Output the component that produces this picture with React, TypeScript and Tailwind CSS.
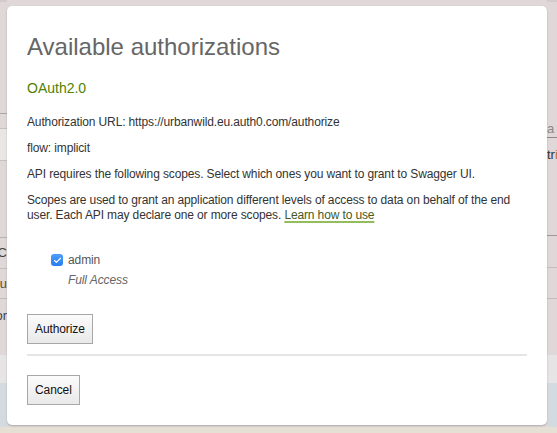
import { Check } from 'lucide-react';

function BackdropLeft() {
  return (
    <div className="flex w-[7px] flex-col overflow-hidden text-[13px] text-[#444]">
      <div className="h-[2px] bg-[#d4cbcb]" />
      <div className="h-[111px]" />
      <div className="h-px bg-[#aea7a7]" />
      <div className="h-[14px]" />
      <div className="h-[33px] border-y border-[#c6c0c0] bg-[#e9e6e6]" />
      <div className="h-[76px]" />
      <div className="flex h-[31px] items-center justify-end whitespace-nowrap border-t border-[#b9b2b2]">2C</div>
      <div className="flex h-[30px] items-center justify-end whitespace-nowrap border-t border-[#c4bdbd] text-[#6b4a2a]">u</div>
      <div className="flex h-[57px] items-start justify-end whitespace-nowrap border-t border-[#c4bdbd] pt-[7px]">or</div>
      <div className="h-[28px] bg-[#e6e4e4]" />
      <div className="flex-1 bg-[#d3dbe1]" />
    </div>
  );
}

function BackdropRight() {
  return (
    <div className="flex w-[10px] flex-col overflow-hidden text-[13px] text-[#333]">
      <div className="h-[2px] bg-[#d4cbcb]" />
      <div className="h-[118px]" />
      <div className="h-[17px] whitespace-nowrap leading-[17px] text-[#888]">a</div>
      <div className="h-px bg-[#8e8888]" />
      <div className="h-[34px] whitespace-nowrap leading-[34px]">
        tr<span className="text-[#c66a10]">i</span>
      </div>
      <div className="h-[63px]" />
      <div className="h-[32px] border-t border-[#9e9898]" />
      <div className="h-[31px] border-t border-[#c4bdbd]" />
      <div className="h-[57px] border-t border-[#c4bdbd]" />
      <div className="h-[28px] bg-[#e6e4e4]" />
      <div className="flex-1 bg-[#d3dbe1]" />
    </div>
  );
}

function Button({ label }: { label: string }) {
  return (
    <button className="h-[30px] border border-[#a8a8a8] bg-linear-to-b from-[#fbfbfb] to-[#e9e9e9] px-[7px] text-[12px] tracking-[-0.1px] text-[#111]">
      {label}
    </button>
  );
}

function Modal() {
  return (
    <div className="absolute left-[7px] top-[6px] w-[540px] rounded-[5px] bg-white px-5 pb-5 pt-[27px] shadow-[0_1px_2px_rgba(0,0,0,0.22)]">
      <h3 className="text-[24px] leading-[28px] text-[#666]">Available authorizations</h3>
      <div className="mt-[17px] text-[14px] leading-5 text-[#547f00]">OAuth2.0</div>

      <div className="mt-[17px] flex flex-col gap-[11px] text-[12px] leading-[15px] tracking-[-0.13px] text-[#333]">
        <p>Authorization URL: https://urbanwild.eu.auth0.com/authorize</p>
        <p>flow: implicit</p>
        <p>API requires the following scopes. Select which ones you want to grant to Swagger UI.</p>
        <p>
          Scopes are used to grant an application different levels of access to data on behalf of the end
          user. Each API may declare one or more scopes.{' '}
          <a className="text-[#44591f] underline decoration-[#93bd5c] decoration-[1.5px] underline-offset-2">
            Learn how to use
          </a>
        </p>
      </div>

      <ul className="mt-[27px] pl-6 text-[12px] leading-5 tracking-[-0.1px]">
        <li>
          <div className="flex items-center gap-[5px] text-[#555]">
            <span className="flex h-[12px] w-[12px] items-center justify-center rounded-[3px] bg-linear-to-b from-[#4b9ef8] to-[#2b7cf0]">
              <Check size={9} strokeWidth={3} className="text-white" />
            </span>
            <span>admin</span>
          </div>
          <div className="pl-[17px] italic text-[#666]">Full Access</div>
        </li>
      </ul>

      <div className="mt-6">
        <Button label="Authorize" />
      </div>
      <div className="mt-[10px] h-[2px] bg-[#e5e5e5]" />
      <div className="mt-[19px]">
        <Button label="Cancel" />
      </div>
    </div>
  );
}

export default function App() {
  return (
    <div className="relative flex h-[433px] w-full flex-col overflow-hidden bg-[#e0d8d8] font-['Liberation_Sans',Arial,sans-serif]">
      <div className="flex flex-1">
        <BackdropLeft />
        <div className="flex-1" />
        <BackdropRight />
      </div>
      <div className="h-[6px] bg-[#e6e0d4]" />
      <Modal />
    </div>
  );
}
